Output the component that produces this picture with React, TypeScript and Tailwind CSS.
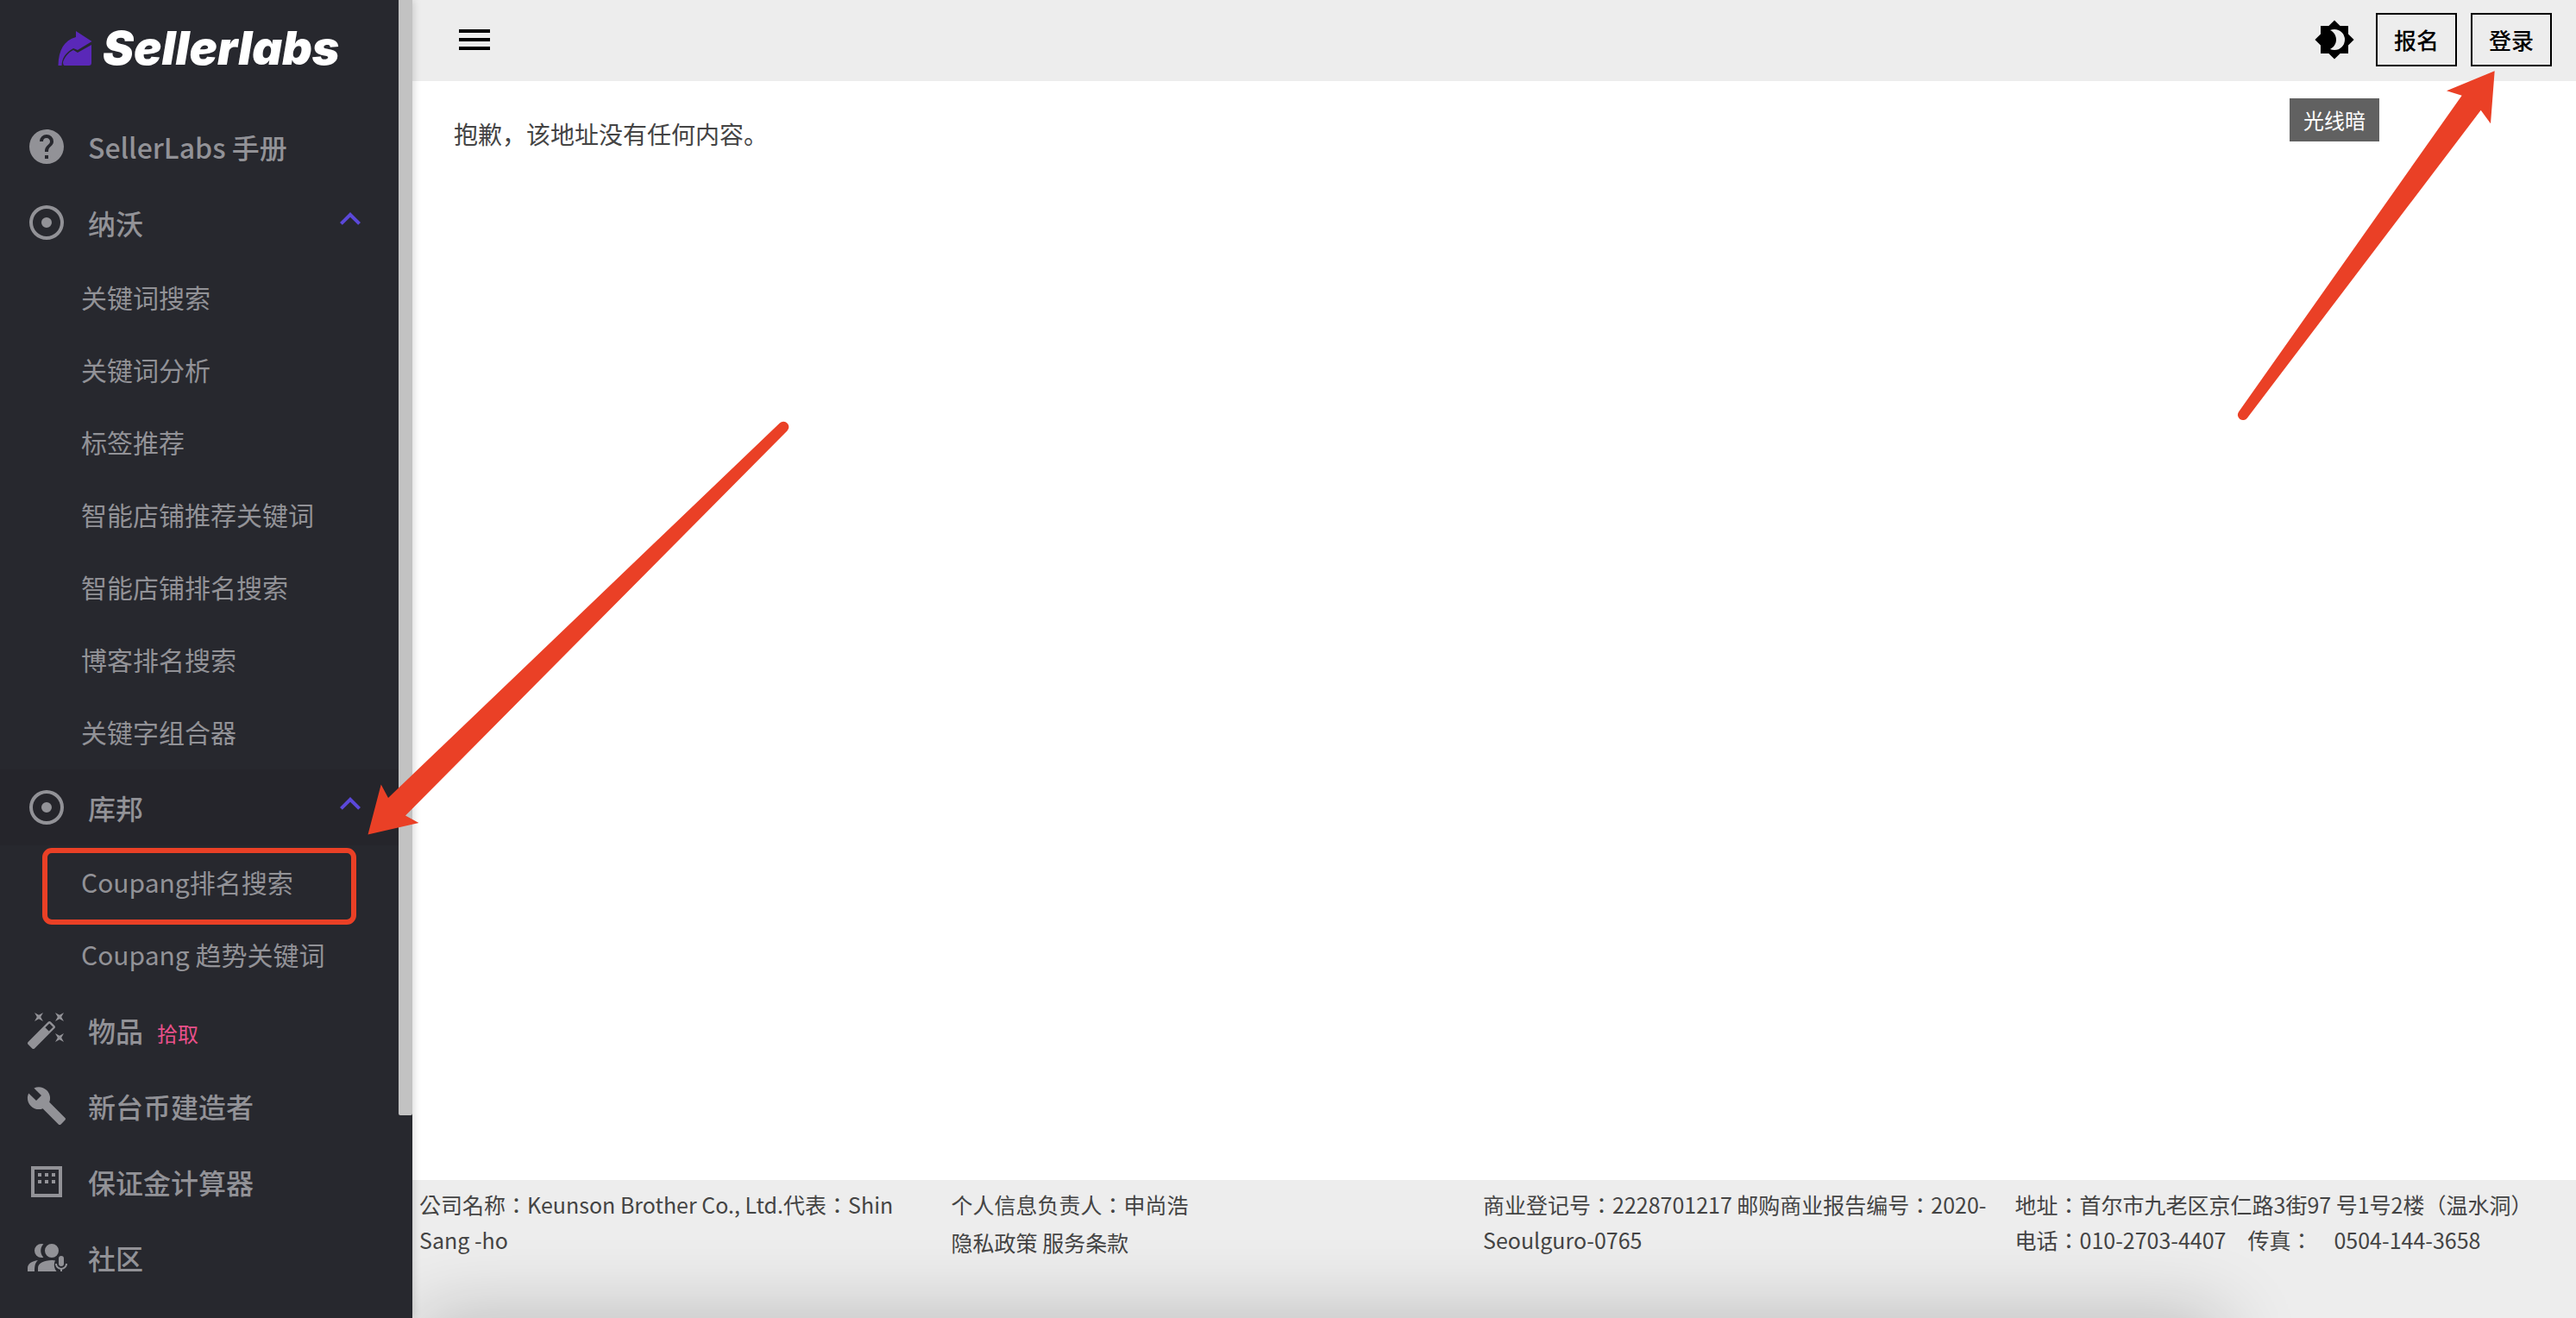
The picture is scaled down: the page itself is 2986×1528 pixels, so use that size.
import type { ReactNode } from 'react'

const HELP = 'M15.07,11.25L14.17,12.17C13.45,12.89 13,13.5 13,15H11V14.5C11,13.39 11.45,12.39 12.17,11.67L13.41,10.41C13.78,10.05 14,9.55 14,9C14,7.89 13.1,7 12,7A2,2 0 0,0 10,9H8A4,4 0 0,1 12,5A4,4 0 0,1 16,9C16,9.88 15.64,10.67 15.07,11.25M13,19H11V17H13M12,2A10,10 0 0,0 2,12A10,10 0 0,0 12,22A10,10 0 0,0 22,12C22,6.47 17.5,2 12,2Z'
const TARGET = 'M12,2A10,10 0 0,0 2,12A10,10 0 0,0 12,22A10,10 0 0,0 22,12A10,10 0 0,0 12,2M12,4A8,8 0 0,1 20,12A8,8 0 0,1 12,20A8,8 0 0,1 4,12A8,8 0 0,1 12,4M12,9A3,3 0 0,0 9,12A3,3 0 0,0 12,15A3,3 0 0,0 15,12A3,3 0 0,0 12,9Z'
const WAND = 'M7.5,5.6L5,7L6.4,4.5L5,2L7.5,3.4L10,2L8.6,4.5L10,7L7.5,5.6M19.5,15.4L22,14L20.6,16.5L22,19L19.5,17.6L17,19L18.4,16.5L17,14L19.5,15.4M22,2L20.6,4.5L22,7L19.5,5.6L17,7L18.4,4.5L17,2L19.5,3.4L22,2M13.34,12.78L15.78,10.34L13.66,8.22L11.22,10.66L13.34,12.78M14.37,7.29L16.71,9.63C17.1,10 17.1,10.65 16.71,11.04L5.04,22.71C4.65,23.1 4,23.1 3.63,22.71L1.29,20.37C0.9,20 0.9,19.35 1.29,18.96L12.96,7.29C13.35,6.9 14,6.9 14.37,7.29Z'
const WRENCH = 'M22.7,19L13.6,9.9C14.5,7.6 14,4.9 12.1,3C10.1,1 7.1,0.6 4.7,1.7L9,6L6,9L1.6,4.7C0.4,7.1 0.9,10.1 2.9,12.1C4.8,14 7.5,14.5 9.8,13.6L18.9,22.7C19.3,23.1 19.9,23.1 20.3,22.7L22.6,20.4C23.1,20 23.1,19.3 22.7,19Z'
const CALCULATOR = 'M3,3H21V21H3V3M5,5V19H19V5H5M7,7H9V9H7V7M11,7H13V9H11V7M15,7H17V9H15V7M7,11H9V13H7V11M11,11H13V13H11V11M15,11H17V13H15V11Z'
const COMMUNITY = 'M15,4A4,4 0 0,1 19,8A4,4 0 0,1 15,12A4,4 0 0,1 11,8A4,4 0 0,1 15,4M10.2,4.1A5.6,5.6 0 0,0 10.2,11.9Q9.600,12 9,12A4,4 0 0,1 9,4Q9.600,4 10.2,4.1M1,20V18C1,15.6 3.5,14 7,13.5C5.5,14.8 5,16.5 5,20H1M7,20V18C7,15.3 10.5,13.5 15,13.5C16,13.5 16.5,13.6 17,13.8C16,15.6 16.300,18.2 17.800,20H7M20.5,11A1.5,1.5 0 0,1 22,12.5V15.5A1.5,1.5 0 0,1 19,15.5V12.5A1.5,1.5 0 0,1 20.5,11M24,15.5C24,17.2 22.7,18.7 21,18.9V20H20V18.9C18.3,18.7 17,17.2 17,15.5H18A2.5,2.5 0 0,0 23,15.5H24Z'
const MENU = 'M3,6H21V8H3V6M3,11H21V13H3V11M3,16H21V18H3V16Z'
const CHEVRON_UP = 'M7.41,15.41L12,10.83L16.59,15.41L18,14L12,8L6,14L7.41,15.41Z'
const BRIGHTNESS = 'M12,18C11.11,18 10.26,17.8 9.5,17.45C11.56,16.5 13,14.42 13,12C13,9.58 11.56,7.5 9.5,6.55C10.26,6.2 11.11,6 12,6A6,6 0 0,1 18,12A6,6 0 0,1 12,18M20,8.69V4H15.31L12,0.69L8.69,4H4V8.69L0.69,12L4,15.31V20H8.69L12,23.31L15.31,20H20V15.31L23.31,12L20,8.69Z'

function Icon({ d, className = '' }: { d: string; className?: string }) {
  return (
    <svg viewBox="0 0 24 24" fillRule="evenodd" aria-hidden="true" className={`size-12 shrink-0 fill-current ${className}`}>
      <path d={d} />
    </svg>
  )
}

function NavLink({ icon, children }: { icon: string; children: ReactNode }) {
  return (
    <a href="#" className="flex h-22 items-center gap-6 pl-[30px] text-[32px] leading-[48px] font-medium">
      <Icon d={icon} />
      <span className="flex items-baseline gap-4">{children}</span>
    </a>
  )
}

function NavGroup({ title, items, active }: { title: string; items: string[]; active?: boolean }) {
  return (
    <div>
      <button
        type="button"
        aria-expanded="true"
        className={`flex h-22 w-full items-center gap-6 pr-8 pl-[30px] text-[32px] leading-[48px] font-medium ${active ? 'bg-[#25252b]' : ''}`}
      >
        <Icon d={TARGET} />
        <span>{title}</span>
        <Icon d={CHEVRON_UP} className="mb-2 ml-auto text-[#5b48d9]" />
      </button>
      <ul className="pb-0.5">
        {items.map((item) => (
          <li key={item}>
            <a href="#" className="flex h-21 items-center pl-[94px] text-[30px]">{item}</a>
          </li>
        ))}
      </ul>
    </div>
  )
}

function Logo() {
  return (
    <a href="#" className="flex h-[126px] items-start gap-3 pt-6 pl-[67px]">
      <svg viewBox="0 0 40 42" aria-hidden="true" className="mt-3 h-[42px] w-10 fill-[#5a28b8]">
        <path d="M0.500,40C1,22 7,11 21,7V0L39.500,12L23,22L18,20C9,25 5,31 4.500,40Z" />
        <path d="M6,36C8,30 12,25 18,22L23,25L39,16V37Q39,40 36,40H8Q6,40 6,36Z" />
      </svg>
      <span className="font-[Inter,sans-serif] text-[54px] leading-[64px] font-black text-white italic">Sellerlabs</span>
    </a>
  )
}

function Sidebar() {
  return (
    <aside className="z-10 flex w-[478px] shrink-0 bg-[#27282e] shadow-[0_0_10px_rgba(0,0,0,0.2)]">
      <nav className="min-w-0 flex-1 text-[#929297]">
        <Logo />
        <NavLink icon={HELP}>SellerLabs 手册</NavLink>
        <NavGroup
          title="纳沃"
          items={['关键词搜索', '关键词分析', '标签推荐', '智能店铺推荐关键词', '智能店铺排名搜索', '博客排名搜索', '关键字组合器']}
        />
        <NavGroup title="库邦" items={['Coupang排名搜索', 'Coupang 趋势关键词']} active />
        <NavLink icon={WAND}>
          物品 <span className="text-2xl font-normal text-[#e8508a]">拾取</span>
        </NavLink>
        <NavLink icon={WRENCH}>新台币建造者</NavLink>
        <NavLink icon={CALCULATOR}>保证金计算器</NavLink>
        <NavLink icon={COMMUNITY}>社区</NavLink>
      </nav>
      {/* Scrollbar */}
      <div className="w-4">
        <div className="h-11/13 rounded-b-xs bg-[#c2c2c2]" />
      </div>
    </aside>
  )
}

function Header() {
  return (
    <header className="flex h-[94px] items-center bg-[#ededed] pr-7 pb-0.5 pl-12 text-black">
      <button type="button" aria-label="菜单">
        <Icon d={MENU} />
      </button>
      <div className="ml-auto flex items-center gap-4">
        <div className="relative mr-2">
          <button type="button" aria-describedby="theme-tip" className="block">
            <Icon d={BRIGHTNESS} />
          </button>
          <span
            id="theme-tip"
            role="tooltip"
            className="absolute top-[92px] left-1/2 -translate-x-1/2 bg-[#616161] px-4 py-[7px] text-2xl leading-9 whitespace-nowrap text-white"
          >
            光线暗
          </span>
        </div>
        <button type="button" className="h-[62px] border-2 border-black px-[19px] pb-0.5 text-[26px] font-medium">报名</button>
        <button type="button" className="h-[62px] border-2 border-black px-[19px] pb-0.5 text-[26px] font-medium">登录</button>
      </div>
    </header>
  )
}

function Footer() {
  return (
    <footer
      lang="zh-TW"
      className="relative grid h-40 grid-cols-4 bg-[#ededed] pt-2 pr-[34px] pl-2 font-['Noto_Sans_CJK_TC',sans-serif] text-[25px] leading-[41px]"
    >
      <p className="pr-6">公司名称：Keunson Brother Co., Ltd.代表：Shin Sang -ho</p>
      <div className="pr-6">
        <p>个人信息负责人：申尚浩</p>
        <p className="pt-[3px]">
          <a href="#">隐私政策</a> <a href="#">服务条款</a>
        </p>
      </div>
      <p className="pr-6">商业登记号：2228701217 邮购商业报告编号：2020-Seoulguro-0765</p>
      <div>
        <p>地址：首尔市九老区京仁路3街97 号1号2楼（温水洞）</p>
        <p>电话：010-2703-4407　传真：　0504-144-3658</p>
      </div>
      <div className="absolute top-full right-[410px] left-2 h-20 shadow-[0_0_90px_rgba(0,0,0,0.24)]" />
    </footer>
  )
}

function Annotations() {
  return (
    <svg aria-hidden="true" className="pointer-events-none absolute top-0 left-0 z-20 h-[1528px] w-[2986px] fill-[#ea4026]">
      <rect x="52" y="986" width="358" height="83" rx="8" fill="none" stroke="#ea4026" strokeWidth="6" />
      <path d="M426.500,967.600L441.700,909.400L450,925L903.800,490.500A6,6 0 0,1 912.500,499.500L470,945.500L485.400,954Z" />
      <path d="M2891.700,82.300L2836,105.300L2853.700,110.700L2595,477.500A6,6 0 0,0 2605,484.500L2875.700,127.700L2887,143.300Z" />
    </svg>
  )
}

export default function App() {
  return (
    <div lang="zh-CN" className="relative flex h-screen overflow-hidden bg-white font-['Noto_Sans_CJK_SC',sans-serif] text-[#444]">
      <Sidebar />
      <div className="flex min-w-0 flex-1 flex-col">
        <Header />
        <main className="flex-1 px-12 py-10 text-[28px] leading-[42px]">
          <p>抱歉，该地址没有任何内容。</p>
        </main>
        <Footer />
      </div>
      <Annotations />
    </div>
  )
}
